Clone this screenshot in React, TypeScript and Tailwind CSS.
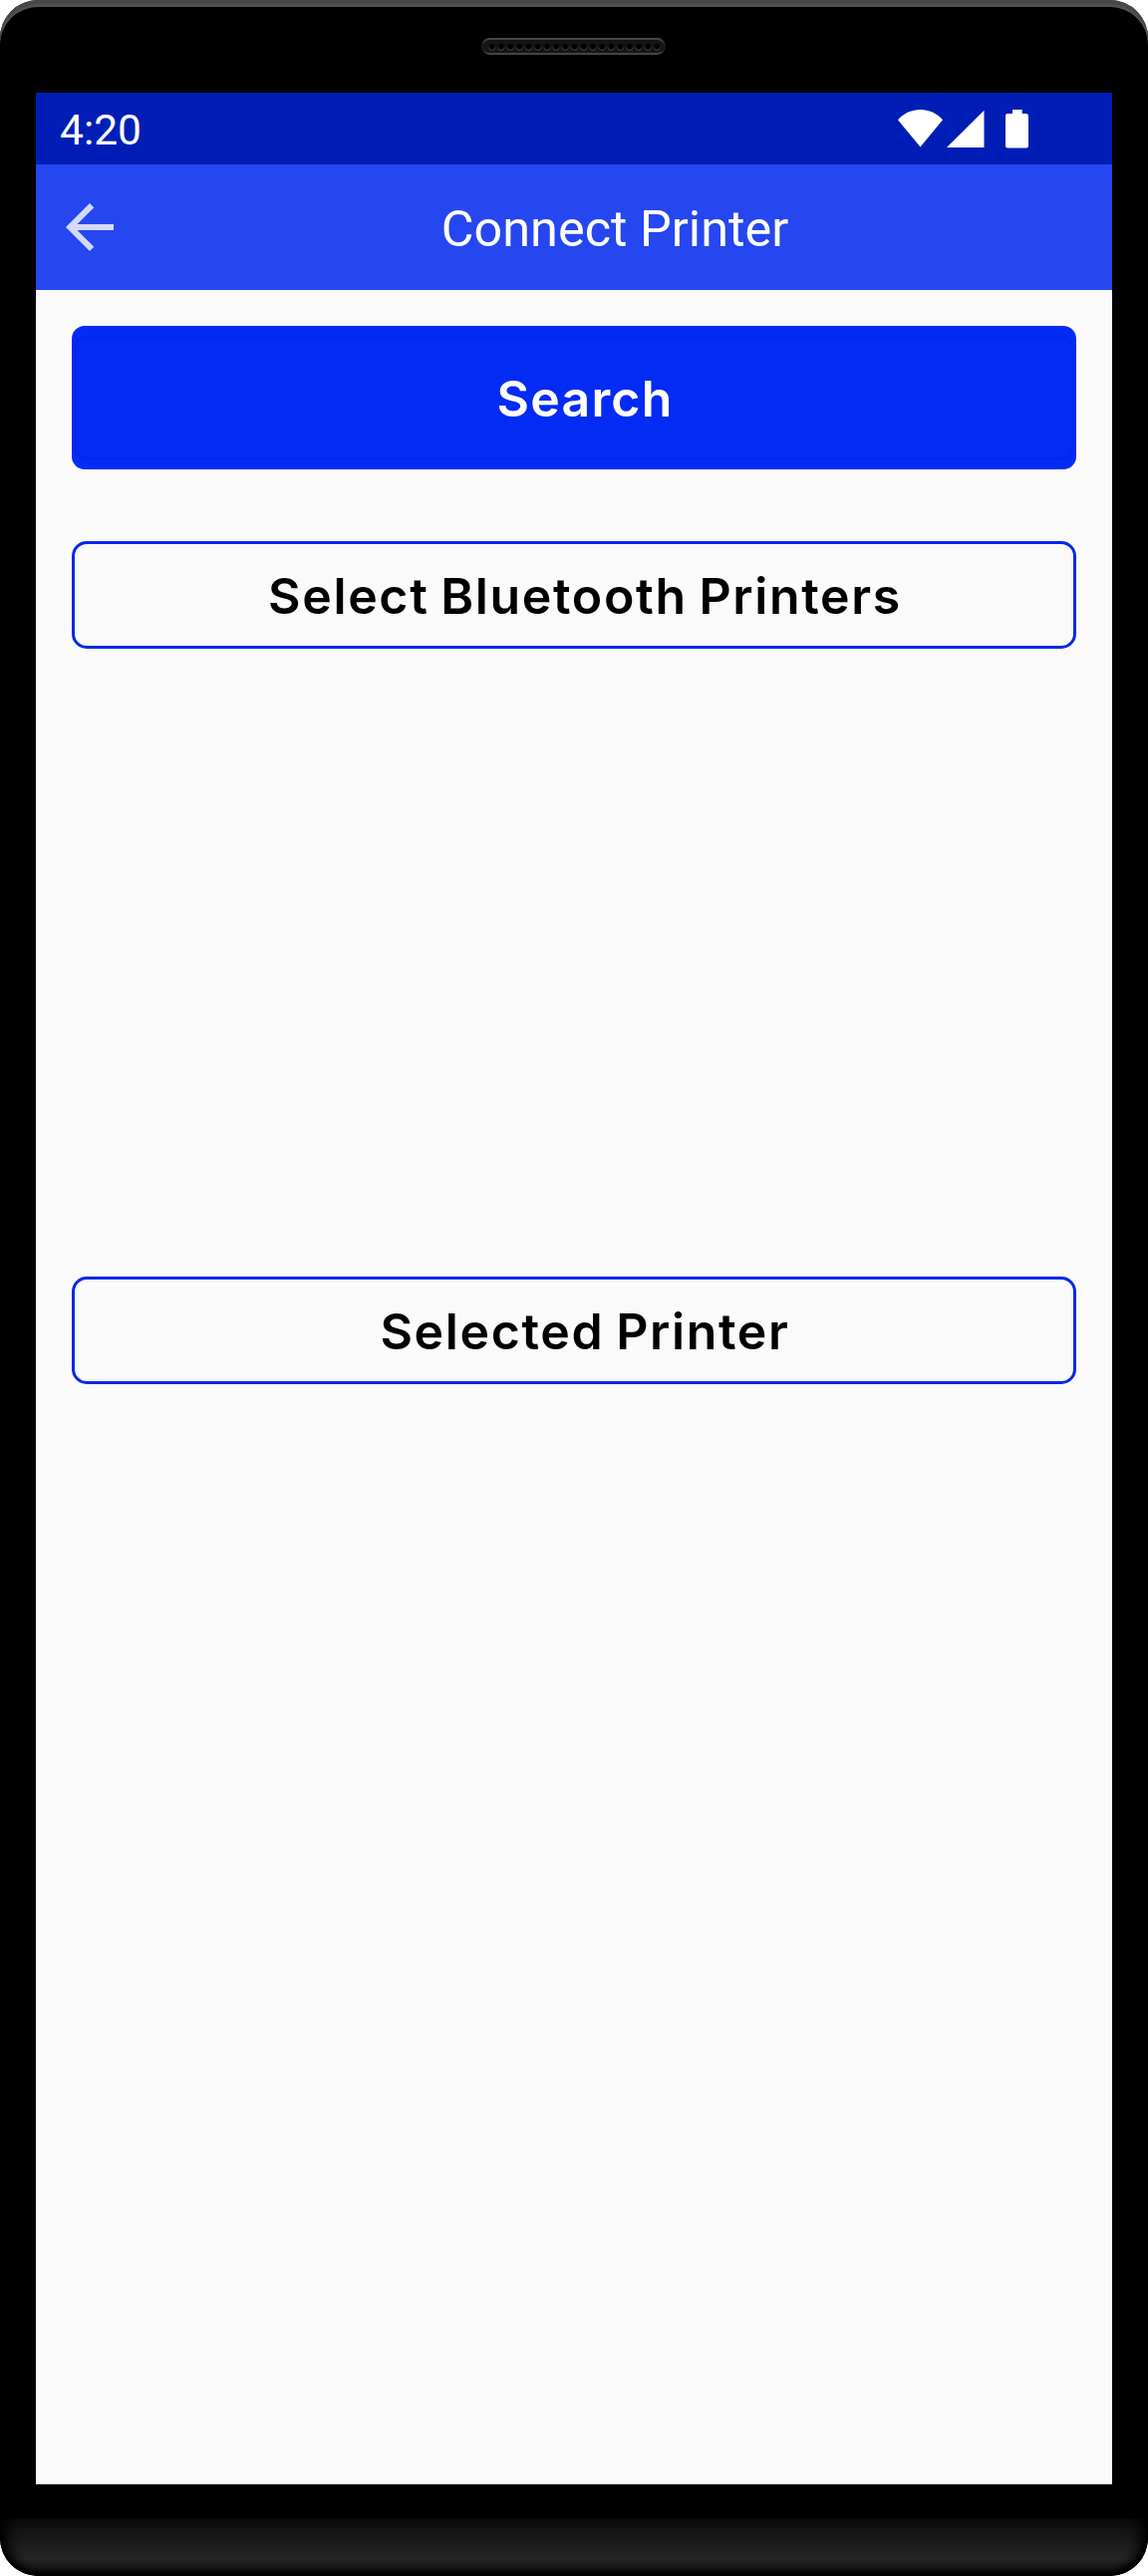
import React from "react";

const holes = Array.from({ length: 19 }, (_, i) => 10.8 + i * 9.2);

function Speaker() {
  return (
    <svg width="186" height="18" viewBox="0 0 186 18" className="block">
      <defs>
        <linearGradient id="rim" x1="0" y1="0" x2="0" y2="1">
          <stop offset="0" stopColor="#484848" />
          <stop offset="0.4" stopColor="#1c1c1c" />
          <stop offset="0.8" stopColor="#1c1c1c" />
          <stop offset="1" stopColor="#484848" />
        </linearGradient>
        <linearGradient id="hole" x1="0" y1="0" x2="0" y2="1">
          <stop offset="0.3" stopColor="#101010" />
          <stop offset="1" stopColor="#505050" />
        </linearGradient>
      </defs>
      <rect x="1" y="1" width="183" height="15" rx="7.5" fill="#151515" stroke="url(#rim)" strokeWidth="2" />
      {holes.map((x) => (
        <circle key={x} cx={x} cy="9" r="3.3" fill="#000" stroke="url(#hole)" strokeWidth="1" />
      ))}
    </svg>
  );
}

function StatusBar() {
  return (
    <div className="flex h-[72px] items-center justify-between bg-[#001eb6] pl-[24px] pr-[84px]">
      <span className="pt-[3px] font-[Roboto] text-[42.5px] leading-[69px] text-white">4:20</span>
      <svg width="131" height="40" viewBox="0 0 131 40" fill="#fff" className="mt-[-1px]">
        <path d="M0 11.3C12-2.4 33-2.4 45 11.3L22.5 38.5Z" />
        <path d="M49 39L86.5 1.7V39Z" />
        <path d="M115 1h9.700v4H129a2.200 2.200 0 0 1 2 2.200V37.500a2.200 2.200 0 0 1-2 2H110.200a2.200 2.200 0 0 1-2.200-2V7.200a2.200 2.200 0 0 1 2.200-2.200H115Z" />
      </svg>
    </div>
  );
}

function AppBar() {
  return (
    <header className="flex h-[126px] items-center bg-[#2646f0] pl-[18px] pr-[8px]">
      <svg width="72" height="72" viewBox="0 0 24 24" fill="#d4dafc">
        <path d="M20 11H7.83l5.59-5.59L12 4l-8 8 8 8 1.41-1.41L7.83 13H20v-2z" />
      </svg>
      <h1 className="flex-1 pt-[3px] text-center font-[Roboto] text-[50.4px] leading-[123px] text-white">
        Connect Printer
      </h1>
    </header>
  );
}

function Heading({ children }: { children: React.ReactNode }) {
  return (
    <div className="flex h-[108px] items-center justify-center rounded-[15px] border-[3px] border-[#0428ea] pl-[22px] pt-[3px] font-[Inter] text-[50px] font-semibold tracking-[1.65px] text-black [word-spacing:-2.5px]">
      {children}
    </div>
  );
}

export default function App() {
  return (
    <div className="flex h-[2585px] w-[1152px] flex-col overflow-hidden rounded-[38px] bg-black">
      <div className="flex h-[93px] flex-col items-center rounded-t-[38px] pt-[38px] shadow-[inset_0_4px_0_#474747,inset_0_7px_0_#505050]">
        <Speaker />
      </div>
      <main className="mx-[36px] h-[2400px] bg-[#fafafa]">
        <StatusBar />
        <AppBar />
        <div className="flex flex-col px-[36px] pt-[36px]">
          <button className="flex h-[144px] flex-col rounded-[13px] bg-[#032bf3] px-px py-[9px]">
            <span className="flex h-[126px] w-full items-center justify-center rounded-[13px] border-[3px] border-[#0428ea] pl-[22px] pt-[3px] font-[Inter] text-[50px] font-semibold tracking-[1.2px] text-white">
              Search
            </span>
          </button>
          <section className="mt-[72px] h-[738px]">
            <Heading>Select Bluetooth Printers</Heading>
          </section>
          <section>
            <Heading>Selected Printer</Heading>
          </section>
        </div>
      </main>
      <div className="mt-[34px] h-[58px] rounded-b-[38px] bg-linear-to-b from-[#0c0c0c] via-[#262626] via-70% to-[#0c0c0c] shadow-[inset_14px_0_14px_-6px_#000,inset_-14px_0_14px_-6px_#000,inset_0_-4px_5px_#000]" />
    </div>
  );
}
